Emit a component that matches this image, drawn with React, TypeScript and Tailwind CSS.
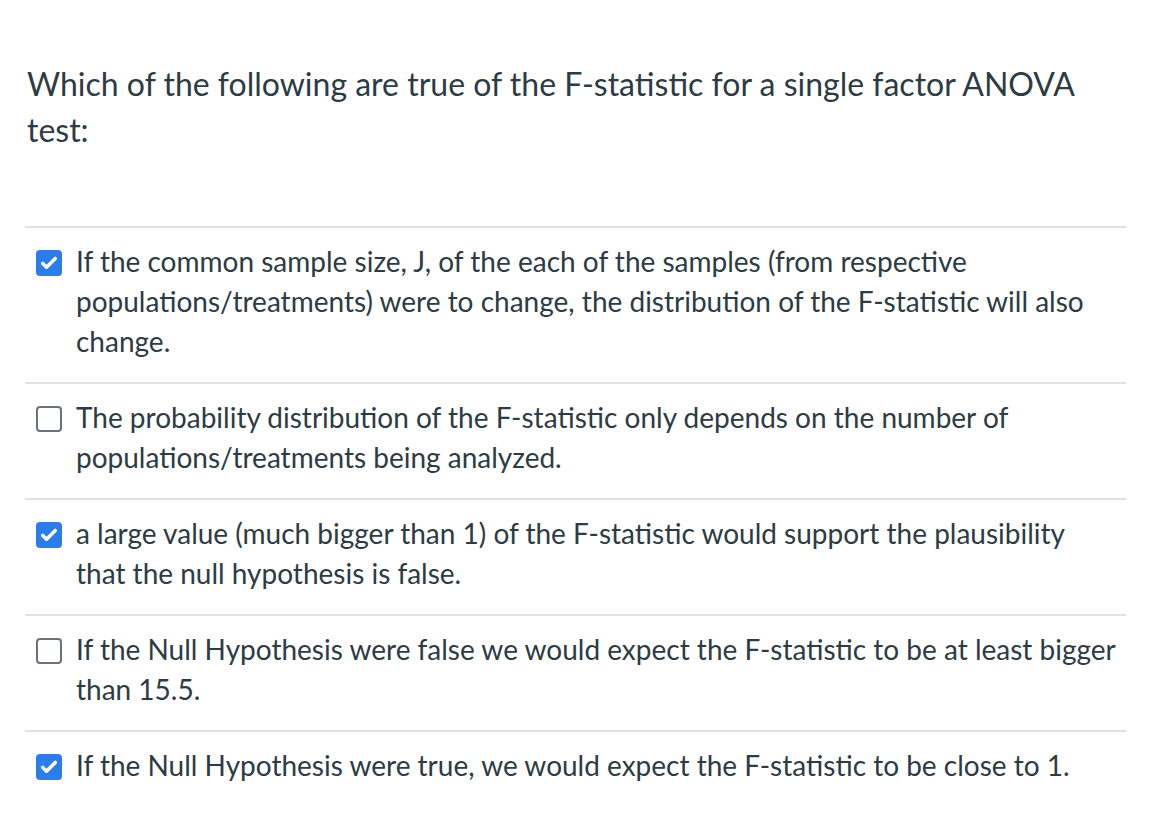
const options: { text: string; checked: boolean }[] = [
  {
    text: "If the common sample size, J, of the each of the samples (from respective populations/treatments) were to change, the distribution of the F-statistic will also change.",
    checked: true,
  },
  {
    text: "The probability distribution of the F-statistic only depends on the number of populations/treatments being analyzed.",
    checked: false,
  },
  {
    text: "a large value (much bigger than 1) of the F-statistic would support the plausibility that the null hypothesis is false.",
    checked: true,
  },
  {
    text: "If the Null Hypothesis were false we would expect the F-statistic to be at least bigger than 15.5.",
    checked: false,
  },
  {
    text: "If the Null Hypothesis were true, we would expect the F-statistic to be close to 1.",
    checked: true,
  },
];

function Checkbox({ checked }: { checked: boolean }) {
  if (checked) {
    return (
      <span className="flex h-[26px] w-[26px] shrink-0 items-center justify-center rounded-[4px] bg-[#2b7de9]">
        <svg width="20" height="20" viewBox="0 0 24 24" fill="none">
          <path d="M4.5 12.5l4.5 4.5L19.5 6.5" stroke="white" strokeWidth="4.2" strokeLinecap="round" strokeLinejoin="round" />
        </svg>
      </span>
    );
  }
  return <span className="block h-[26px] w-[26px] shrink-0 rounded-[4px] border-2 border-[#68737d] bg-white" />;
}

export default function App() {
  return (
    <div className="min-h-screen bg-white pt-[61px] pl-[25px] pr-[32px] text-[#2d3b45] [font-family:Lato,'Noto_Sans',sans-serif]">
      <p className="max-w-[1070px] pl-[2px] text-[32px] leading-[46px]">
        Which of the following are true of the F-statistic for a single factor ANOVA test:
      </p>
      <div className="mt-[73px]">
        {options.map((o, i) => (
          <div key={i} className="flex gap-[14px] border-t-2 border-[#dfe2e4] pl-[11px] pt-[13px] pb-[21px]">
            <div className="pt-[9px]">
              <Checkbox checked={o.checked} />
            </div>
            <p className="pr-[9px] text-[28px] leading-[40px]">{o.text}</p>
          </div>
        ))}
      </div>
    </div>
  );
}
